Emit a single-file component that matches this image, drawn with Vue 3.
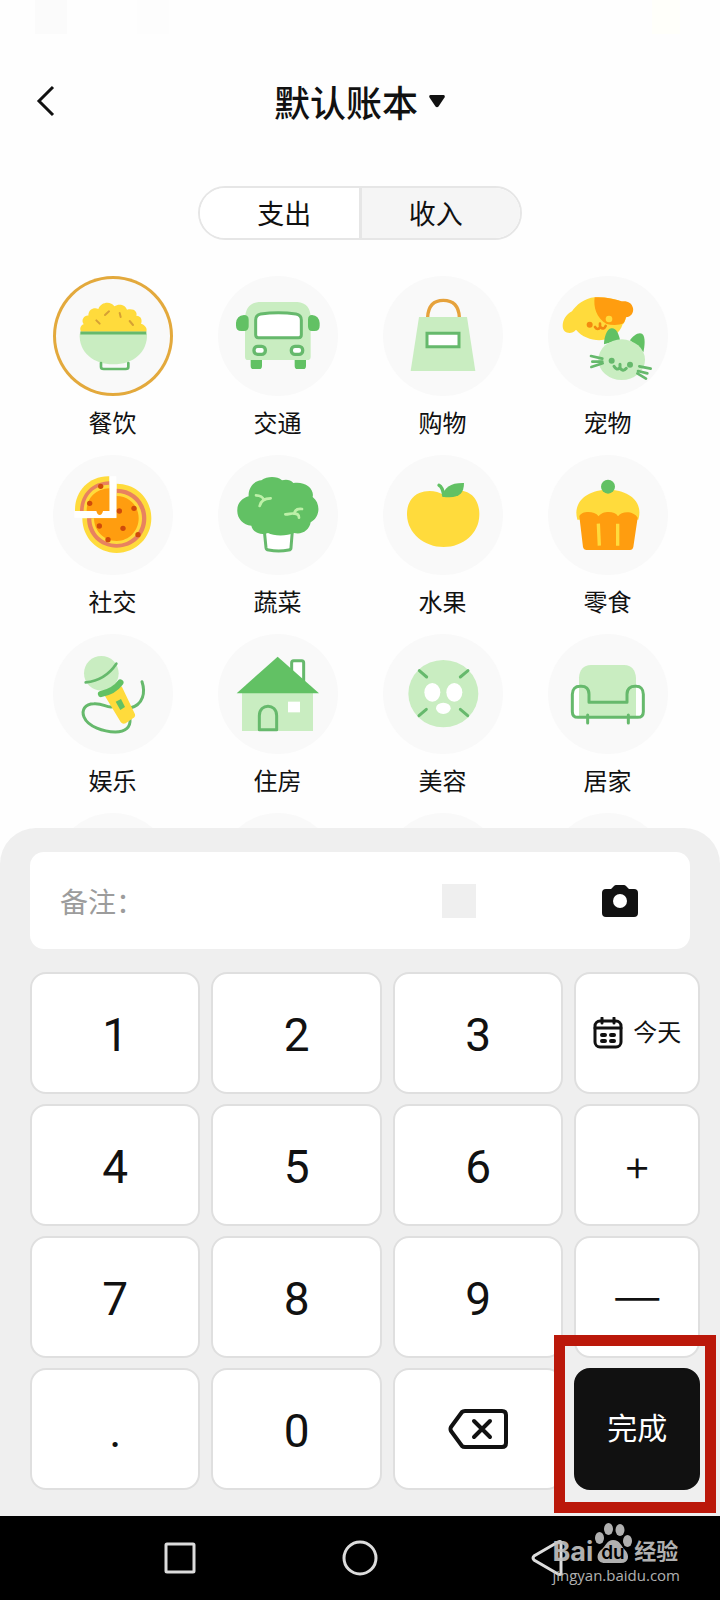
<template>
  <div class="page">
    <div class="status-bar">
      <i class="block"></i>
      <i class="block faint"></i>
      <i class="block battery"></i>
    </div>

    <header class="header">
      <button class="back-btn" aria-label="返回">
        <svg viewBox="0 0 20 32"><path d="M18 2 4 16l14 14" /></svg>
      </button>
      <button class="book-btn">
        默认账本
        <svg viewBox="0 0 18 14"><path d="M2.500 1h13q2 .5 1 2.500l-6 9q-1.500 1.500-3 0l-6-9q-1-2 1-2.500z" /></svg>
      </button>
    </header>

    <div class="type-tabs">
      <button
        v-for="tab in tabs"
        :key="tab.id"
        :class="{ active: activeTab === tab.id }"
        @click="activeTab = tab.id"
      >
        {{ tab.name }}
      </button>
    </div>

    <main class="categories">
      <button
        v-for="item in categories"
        :key="item.name"
        class="category"
        :class="{ selected: selected === item.name }"
        @click="selected = item.name"
      >
        <span class="circle">
          <svg :viewBox="item.box" fill="none" stroke-linecap="round" stroke-linejoin="round" v-html="item.icon"></svg>
        </span>
        <span class="category-name">{{ item.name }}</span>
      </button>
      <!-- 下一行，被键盘面板遮住 -->
      <span v-for="n in 4" :key="n" class="category" aria-hidden="true">
        <span class="circle"></span>
      </span>
    </main>

    <section class="panel">
      <div class="note">
        <input v-model="note" type="text" placeholder="备注：" aria-label="备注">
        <i class="note-block"></i>
        <button class="camera-btn" aria-label="拍照">
          <svg viewBox="0 0 38 34">
            <path d="M5 5h5l3-3q1-1 2-1h8q1 0 2 1l3 3h5q4 0 4 4v20q0 4-4 4H5q-4 0-4-4V9q0-4 4-4z" fill="#111" />
            <circle cx="19" cy="17" r="7" fill="#fff" />
          </svg>
        </button>
      </div>

      <div class="keypad">
        <template v-for="key in keys" :key="key">
          <button v-if="key === 'today'" class="key today">
            <svg viewBox="0 0 30 32" fill="none" stroke="#111" stroke-width="3" stroke-linecap="round">
              <rect x="2" y="4" width="26" height="26" rx="5" />
              <path d="M2 11h26M9 1v5M21 1v5" />
              <path d="M9 18h3M18 18h3M9 24h3M18 24h3" stroke-width="4" />
            </svg>
            今天
          </button>
          <button v-else-if="key === 'delete'" class="key delete" aria-label="删除" @click="remove">
            <svg viewBox="0 0 60 42" fill="none" stroke="#111" stroke-width="4" stroke-linecap="round" stroke-linejoin="round">
              <path d="M17 3h37q4 0 4 4v28q0 4-4 4H17q-2 0-3-1L3 23q-1-2 0-4L14 4q1-1 3-1z" />
              <path d="m26 13 16 16M42 13 26 29" />
            </svg>
          </button>
          <div v-else-if="key === 'done'" class="done-wrap">
            <button class="key done">完成</button>
            <i class="highlight"></i>
          </div>
          <button v-else class="key" :class="{ sign: key === '+' || key === '—' }" @click="press(key)">{{ key }}</button>
        </template>
      </div>
    </section>

    <nav class="nav-bar">
      <button aria-label="最近任务">
        <svg viewBox="0 0 36 36"><rect x="4" y="4" width="28" height="28" rx="1" /></svg>
      </button>
      <button aria-label="主页">
        <svg viewBox="0 0 36 36"><circle cx="18" cy="18" r="16" /></svg>
      </button>
      <button aria-label="后退">
        <svg viewBox="0 0 36 36"><path d="M39 2v32q-1 1-3 0L12 20q-2-2 0-4L36 2q2-1 3 0z" /></svg>
      </button>
      <div class="watermark">
        <div class="brand">
          <span class="brand-bai">Bai</span>
          <svg class="paw" viewBox="0 0 37 40">
            <ellipse cx="4.500" cy="15" rx="4.500" ry="6" />
            <ellipse cx="13.500" cy="6" rx="4.500" ry="6" />
            <ellipse cx="25" cy="7" rx="4.500" ry="6" />
            <ellipse cx="32.500" cy="18" rx="4.500" ry="6" />
            <path d="M18 17c7 0 8 6 12 10 5 5 4 13-4 13H10C1 40 1 31 6 27c5-4 6-10 12-10z" />
            <text x="18" y="36" text-anchor="middle">du</text>
          </svg>
          <span class="brand-cn">经验</span>
        </div>
        <div class="site">jingyan.baidu.com</div>
      </div>
    </nav>
  </div>
</template>

<script setup>
import { ref } from 'vue'

const tabs = [
  { id: 'expense', name: '支出' },
  { id: 'income', name: '收入' }
]

// 分类图标
const categories = [
  {
    name: '餐饮',
    box: '38 33 360 360',
    icon: `<path d="M122 200c-6-12 2-20 8-22-10-14 4-28 14-26 0-20 18-26 30-20 8-22 38-24 48-8 14-10 34-4 38 10 22-6 32 8 28 18 16 0 18 16 14 24 12 4 20 14 16 24z" fill="#ffdb3c"/>
      <path d="M118 206h202c2 56-42 92-101 92s-104-36-101-92z" fill="#c9edc1"/>
      <path d="M120 204h198" stroke="#66b96c" stroke-width="9" stroke-linecap="butt"/>
      <path d="M182 294v12q0 6 8 6h66q8 0 8-6v-12" stroke="#66b96c" stroke-width="8"/>
      <path d="m168 166 10 10M194 150l12-11M238 144l3 12M268 168l10 12" stroke="#d6a034" stroke-width="6"/>`
  },
  {
    name: '交通',
    box: '534 33 360 360',
    icon: `<path d="M632 282h34v20q0 10-8 10h-18q-8 0-8-10zM764 282h34v20q0 10-8 10h-18q-8 0-8-10z" fill="#62c164"/>
      <path d="M656 111h116q42 4 40 52v112q0 10-10 10H624q-9 0-9-10V163q0-48 41-52z" fill="#c9edc1"/>
      <path d="M612 150q14 0 14 14v20q0 14-14 14h-8q-16 0-16-16v-8q2-22 24-24zM816 150q-12 0-12 14v20q0 14 12 14h8q15 0 15-16v-8q-2-22-23-24z" fill="#62c164"/>
      <path d="M662 147q53-8 106 0 16 3 16 18v45q0 8-8 8H655q-8 0-8-8v-45q0-15 15-18z" fill="#fff" stroke="#66b96c" stroke-width="9"/>
      <rect x="642" y="244" width="34" height="24" rx="11" fill="#fff" stroke="#66b96c" stroke-width="10"/>
      <rect x="754" y="244" width="34" height="24" rx="11" fill="#fff" stroke="#66b96c" stroke-width="10"/>`
  },
  {
    name: '购物',
    box: '38 33 360 360',
    icon: `<path d="M172 156c2-34 18-50 47-50s46 16 48 50" stroke="#e6a23c" stroke-width="10" stroke-linecap="butt"/>
      <path d="M146 156h144l25 162H121z" fill="#c9edc1"/>
      <path d="M170 205h96v40h-96z" fill="#fff" stroke="#66b96c" stroke-width="9" stroke-linejoin="miter"/>`
  },
  {
    name: '宠物',
    box: '534 33 360 360',
    icon: `<path d="M674 97c-30 2-56 24-68 42-18 10-28 26-28 44 0 22 26 28 40 11 18 22 44 30 70 32 34-2 62-20 70-48 14-10 20-62-14-72-20-6-46-10-70-9z" fill="#ffdb3c"/>
      <path d="M674 97c-4 28 4 62 36 80 16 4 38 4 50-2 4-4 6-12 8-18 14 0 24-14 21-28-4-16-16-22-34-20-24-8-52-14-81-12z" fill="#ff9d0f"/>
      <circle cx="659" cy="179" r="9" fill="#f38a10"/><circle cx="717" cy="162" r="10" fill="#ffdb3c"/>
      <path d="M675 186q8 12 16 0 10 10 16-3M690 176v8" stroke="#f38a10" stroke-width="8"/>
      <path d="M702 238c0-20 8-46 22-48 14-2 22 16 26 34zM780 226c8-14 26-26 36-20 12 8 8 40 4 56z" fill="#62c164"/>
      <ellipse cx="755" cy="284" rx="70" ry="61" fill="#c9edc1"/>
      <circle cx="725" cy="287" r="9" fill="#66b96c"/><circle cx="780" cy="299" r="9" fill="#66b96c"/>
      <path d="M732 304q8 14 17 4 10 14 20 2M750 298v10" stroke="#66b96c" stroke-width="9"/>
      <path d="m663 273 34 8M667 290h30M664 306l34-11M842 311l-34-7M832 325l-28-7M828 341l-26-16" stroke="#66b96c" stroke-width="8"/>`
  },
  {
    name: '社交',
    box: '38 30 360 360',
    icon: `<path d="M207 94v104H104c-2-58 42-106 103-104z" fill="#ffdb3c"/>
      <path d="M207 109v89h-88c0-50 36-88 88-89z" fill="#e8825f"/><path d="M207 119v79h-77c0-44 30-78 77-79z" fill="#ffdb3c"/><path d="M207 130v68h-68c0-40 28-66 68-68z" fill="#ff9d0f"/>
      <path d="M126 220h103V116c60 0 104 46 104 104s-46 104-104 104-103-46-103-104z" fill="#ffdb3c"/>
      <path d="M140 220h89v-89c50 0 89 38 89 89s-38 88-89 88-89-38-89-88z" fill="#e8825f"/>
      <path d="M153 220h76v-76c43 0 76 33 76 76s-33 77-76 77-76-34-76-77z" fill="#ffdb3c"/>
      <path d="M161 220h68v-67c38 0 66 30 66 67s-28 68-66 68-68-30-68-68z" fill="#ff9d0f"/>
      <path d="M102 208h116V94" stroke="#fff" stroke-width="20" stroke-linecap="butt" stroke-linejoin="miter"/>
      <path d="M168 198h20q-3 12-10 12t-10-12z" fill="#ff9d0f"/>
      <g fill="#cf4b0b"><circle cx="181" cy="124" r="8"/><circle cx="148" cy="175" r="8"/><circle cx="237" cy="198" r="8"/><circle cx="281" cy="190" r="8"/><circle cx="177" cy="243" r="8"/><circle cx="248" cy="250" r="8"/><circle cx="293" cy="269" r="8"/><circle cx="203" cy="284" r="8"/></g>`
  },
  {
    name: '蔬菜',
    box: '534 30 360 360',
    icon: `<path d="m673 258 5 50q1 6 8 7 30 6 60 0 7-1 7-7l4-50" fill="#fff" stroke="#66b96c" stroke-width="9"/>
      <path d="M664 106c20-14 48-12 62 0 12-4 26-2 34 8 34-6 64 16 58 42 24 18 24 60-6 76-4 24-26 38-50 32-20 10-62 10-78 0-22 8-46-2-50-22-26-2-44-24-42-48 0-20 14-34 34-40-2-24 14-46 38-48z" fill="#62c164"/>
      <path d="M648 151c12 0 22 6 23 14M692 160c-18 0-30 8-33 23M736 208c12 0 18-4 26-2M786 192c-18-2-22 6-23 14 10 0 14 4 14 12" stroke="#bdf0a8" stroke-width="8"/>`
  },
  {
    name: '水果',
    box: '38 30 360 360',
    icon: `<path d="M219 150c-18-14-50-16-72-6-28 12-38 40-37 66 2 56 52 96 110 96s106-40 107-96c1-28-10-56-36-68-22-10-54-8-72 8z" fill="#ffdb3c"/>
      <path d="M206 121c8 4 12 14 14 30" stroke="#62c164" stroke-width="10"/>
      <path d="M216 155c4-28 26-42 65-41 0 34-18 48-65 41z" fill="#62c164"/>`
  },
  {
    name: '零食',
    box: '534 30 360 360',
    icon: `<path d="M622 224c-16-58 36-90 92-90s108 32 91 90z" fill="#ffdb3c"/>
      <path d="M628 214c6-16 44-18 58 0 10-16 48-18 58 0 12-18 48-16 59 4l-13 88q-2 9-10 9H650q-9 0-11-9z" fill="#ff9d0f"/>
      <path d="m685 236 3 66M743 236v66" stroke="#ffdb3c" stroke-width="10" stroke-linecap="butt"/>
      <circle cx="714" cy="125" r="21" fill="#62c164"/>`
  },
  {
    name: '娱乐',
    box: '38 27 360 360',
    icon: `<path d="M221 244c-20 8-30-10-60-8-28 0-38 20-30 40 12 30 60 44 94 45 30-1 46-14 44-38M305 170c10 30 6 70-38 80" stroke="#66b96c" stroke-width="9"/>
      <circle cx="183" cy="145" r="52" fill="#c9edc1"/>
      <path d="M136 172c40-4 72-26 92-56" stroke="#66b96c" stroke-width="8"/>
      <path d="m192 210 52-26 40 84q2 8-6 12l-22 15q-10 3-15-4z" fill="#ffdb3c"/>
      <path d="M182 207q38-7 58-34" stroke="#62c164" stroke-width="19"/>
      <path d="m226 230 16-8 12 24-14 9z" fill="#62c164"/>`
  },
  {
    name: '住房',
    box: '534 27 360 360',
    icon: `<path d="M606 204h213v114H606z" fill="#c9edc1"/>
      <path d="M755 170v-57q0-6 6-6h24q6 0 6 6v57z" fill="#fff" stroke="#66b96c" stroke-width="9"/>
      <path d="m713 95 124 110H590z" fill="#62c164"/>
      <path d="M658 314v-42c0-38 52-38 52 0v42z" stroke="#66b96c" stroke-width="9"/>
      <path d="M744 230h36v32h-36z" fill="#fff"/>`
  },
  {
    name: '美容',
    box: '38 27 360 360',
    icon: `<ellipse cx="219" cy="206" rx="105" ry="101" fill="#c9edc1"/>
      <ellipse cx="186" cy="202" rx="24" ry="28" fill="#fff"/><ellipse cx="252" cy="202" rx="24" ry="28" fill="#fff"/><ellipse cx="219" cy="250" rx="22" ry="17" fill="#fff"/>
      <path d="m147 137 22 19M293 137l-23 19M146 272l22-19M270 253l22 19" stroke="#66b96c" stroke-width="9"/>`
  },
  {
    name: '居家',
    box: '534 27 360 360',
    icon: `<path d="M607 277v-73c0-24 50-24 50 0v73zM771 277v-73c0-24 50-24 50 0v73z" fill="#fff"/>
      <path d="M627 277V158q2-36 36-38h100q32 2 35 38v119z" fill="#c9edc1"/>
      <path d="M607 208v52q0 17 17 17h179q17 0 17-17v-52c0-16-10-24-20-24-20-2-29 8-29 24v24H657v-24c0-16-8-26-28-24-12 0-22 8-22 24zM653 270v24M775 270v24" stroke="#66b96c" stroke-width="9"/>`
  }
]

const keys = ['1', '2', '3', 'today', '4', '5', '6', '+', '7', '8', '9', '—', '.', '0', 'delete', 'done']

const activeTab = ref('expense')
const selected = ref('餐饮')
const note = ref('')
const amount = ref('')

// 输入金额
const press = (key) => {
  amount.value += key
}

// 删除最后一位
const remove = () => {
  amount.value = amount.value.slice(0, -1)
}
</script>

<style>
body {
  background: #fefefe;
}
</style>

<style scoped>
.page {
  display: flex;
  flex-direction: column;
  height: 100vh;
  overflow: hidden;
  background: #fefefe;
  color: #111;
  font-family: "Noto Sans CJK SC", sans-serif;
}

button {
  margin: 0;
  padding: 0;
  border: none;
  background: none;
  color: inherit;
  font-family: inherit;
  cursor: pointer;
}

svg {
  display: block;
}

.status-bar {
  display: flex;
  gap: 70px;
  height: 34px;
  padding: 0 40px 0 35px;
}

.block {
  width: 32px;
  background: #fbfbfb;
}

.block.faint {
  background: #fdfdfd;
}

.block.battery {
  width: 28px;
  margin-left: auto;
  background: #fffffa;
}

.header {
  display: grid;
  grid-template-columns: 1fr auto 1fr;
  align-items: center;
  height: 60px;
  margin-top: 37px;
  padding: 0 35px;
}

.back-btn {
  justify-self: start;
}

.back-btn svg {
  width: 20px;
  height: 32px;
  fill: none;
  stroke: #111;
  stroke-width: 3;
}

.book-btn {
  display: flex;
  align-items: center;
  gap: 10px;
  font-size: 36px;
  font-weight: 500;
  line-height: 60px;
}

.book-btn svg {
  width: 18px;
  height: 14px;
  fill: #111;
}

.type-tabs {
  display: flex;
  align-self: center;
  width: 45%;
  height: 54px;
  margin-top: 55px;
  box-sizing: border-box;
  border: 2px solid #e6e6e6;
  border-radius: 27px;
  overflow: hidden;
}

.type-tabs button {
  flex: 1;
  background: #f5f5f5;
  font-size: 27px;
  line-height: 50px;
}

.type-tabs button:first-child {
  padding-left: 10px;
  border-right: 3px solid #e6e6e6;
}

.type-tabs button:last-child {
  padding-right: 10px;
}

.type-tabs button.active {
  background: #fff;
}

.categories {
  flex: 1 1 0;
  display: grid;
  grid-template-columns: repeat(4, 1fr);
  align-content: start;
  row-gap: 19px;
  min-height: 0;
  margin-top: 36px;
  padding: 0 30px;
  overflow: hidden;
}

.category {
  display: flex;
  flex-direction: column;
  align-items: center;
  gap: 12px;
}

.circle {
  width: 120px;
  height: 120px;
  border-radius: 50%;
  background: #f9f9f9;
}

.circle svg {
  width: 120px;
  height: 120px;
}

.selected .circle {
  box-shadow: inset 0 0 0 3px #e3a93c;
}

.category-name {
  font-size: 24px;
  line-height: 28px;
}

.panel {
  padding: 24px 20px 26px 30px;
  border-radius: 36px 36px 0 0;
  background: #efefef;
}

.note {
  display: flex;
  align-items: center;
  height: 97px;
  margin-right: 10px;
  padding: 0 51px 0 30px;
  box-sizing: border-box;
  border-radius: 14px;
  background: #fff;
}

.note input {
  flex: 1;
  min-width: 0;
  height: 60px;
  padding: 0;
  border: none;
  outline: none;
  background: none;
  color: #111;
  font-family: inherit;
  font-size: 28px;
}

.note input::placeholder {
  color: #9c9c9c;
  opacity: 1;
}

.note-block {
  width: 34px;
  height: 34px;
  margin-right: 125px;
  background: #efefef;
}

.camera-btn svg {
  width: 38px;
  height: 34px;
}

.keypad {
  display: grid;
  grid-template-columns: 171fr 171fr 171fr 126fr;
  grid-auto-rows: 122px;
  gap: 10px 11px;
  margin-top: 23px;
}

.key {
  display: flex;
  align-items: center;
  justify-content: center;
  min-width: 0;
  padding-top: 4px;
  border: 2px solid #dfdfdf;
  border-radius: 16px;
  background: #fff;
  color: #111;
  font-family: Roboto, "Noto Sans CJK SC", sans-serif;
  font-size: 46px;
  line-height: 60px;
}

.key.sign {
  padding-top: 0;
  font-family: Inter, sans-serif;
  font-size: 44px;
  font-weight: 300;
}

.key.today {
  gap: 10px;
  padding-top: 0;
  font-size: 24px;
}

.today svg {
  width: 30px;
  height: 32px;
}

.key.delete {
  padding-top: 0;
}

.delete svg {
  width: 60px;
  height: 42px;
}

.done-wrap {
  position: relative;
  display: flex;
}

.key.done {
  flex: 1;
  padding-top: 0;
  border-color: #111;
  background: #111;
  color: #fff;
  font-size: 30px;
}

/* 完成键的红色标注框 */
.highlight {
  position: absolute;
  top: -33px;
  right: -16px;
  bottom: -23px;
  left: -20px;
  border: 11px solid #bb180a;
  pointer-events: none;
}

.nav-bar {
  position: relative;
  display: flex;
  align-items: center;
  justify-content: center;
  gap: 20%;
  height: 84px;
  background: #000;
}

.nav-bar button svg {
  width: 36px;
  height: 36px;
  fill: none;
  stroke: #dcdcdc;
  stroke-width: 3;
  overflow: visible;
}

.watermark {
  position: absolute;
  top: 7px;
  right: 40px;
  color: #c4c4c4;
  opacity: 0.9;
}

.brand {
  display: flex;
  align-items: flex-end;
  gap: 2px;
  height: 40px;
}

.brand-bai {
  font-family: Inter, sans-serif;
  font-size: 27px;
  font-weight: 700;
  line-height: 22px;
}

.paw {
  width: 37px;
  height: 40px;
  fill: #c4c4c4;
}

.paw text {
  fill: #000;
  font-family: Inter, sans-serif;
  font-size: 19px;
  font-weight: 600;
}

.brand-cn {
  font-size: 22px;
  font-weight: 700;
  line-height: 28px;
}

.site {
  margin-top: 2px;
  font-family: "Open Sans", sans-serif;
  font-size: 15px;
  line-height: 20px;
}
</style>
